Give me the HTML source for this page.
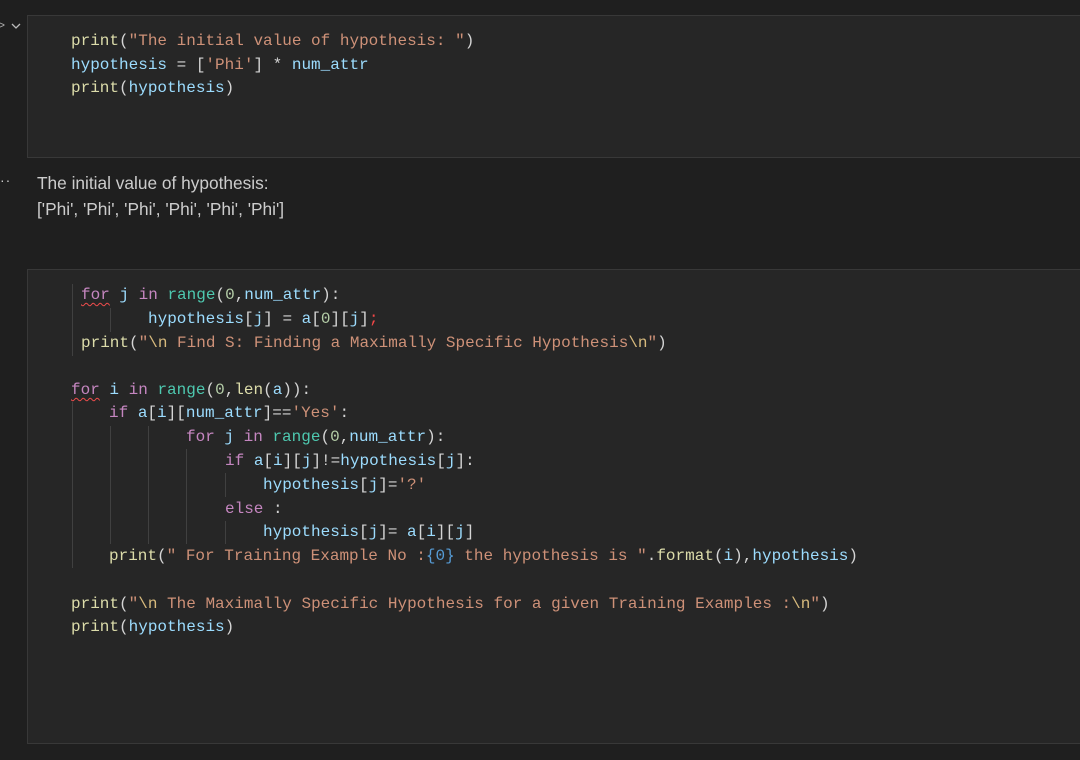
<!DOCTYPE html>
<html><head><meta charset="utf-8"><style>
html,body{margin:0;padding:0;background:#1f1f1f;width:1080px;height:760px;overflow:hidden;position:relative}
.cell{position:absolute;left:27px;width:1060px;background:#262626;border:1px solid #383838;box-sizing:border-box}
.l{position:absolute;font-family:"Liberation Mono",monospace;font-size:16px;line-height:24px;white-space:pre;color:#d4d4d4}
.f{color:#dcdcaa}.s{color:#ce9178}.v{color:#9cdcfe}.k{color:#c586c0}.c{color:#4ec9b0}.n{color:#b5cea8}.e{color:#d7ba7d}.b{color:#569cd6}.r{color:#f44747}
.sq{text-decoration:underline wavy #f14c4c;text-decoration-thickness:1px;text-underline-offset:3px}
.g{position:absolute;width:1px;background:#404040}
.out{position:absolute;left:37px;font-family:"Liberation Sans",sans-serif;font-size:17.3px;color:#cccccc;line-height:22px;letter-spacing:0px}
</style></head><body>
<div style="position:absolute;left:-2px;top:18px;color:#aaa;font:12px 'Liberation Sans',sans-serif">&gt;</div>
<svg style="position:absolute;left:11px;top:23px" width="10" height="7"><path d="M1 1 L5 5 L9 1" stroke="#bbb" stroke-width="1.3" fill="none"/></svg>
<div class="cell" style="top:15px;height:143px"></div>
<div class="l" style="left:71px;top:29px"><span class="f">print</span>(<span class="s">"The initial value of hypothesis: "</span>)</div>
<div class="l" style="left:71px;top:53px"><span class="v">hypothesis</span> = [<span class="s">'Phi'</span>] * <span class="v">num_attr</span></div>
<div class="l" style="left:71px;top:76px"><span class="f">print</span>(<span class="v">hypothesis</span>)</div>
<div style="position:absolute;left:0;top:172px;color:#ccc;font:14px 'Liberation Sans',sans-serif;letter-spacing:1px">··</div>
<div class="out" style="top:172px">The initial value of hypothesis:</div>
<div class="out" style="top:198px">['Phi', 'Phi', 'Phi', 'Phi', 'Phi', 'Phi']</div>
<div class="cell" style="top:269px;height:475px"></div>
<div class="g" style="left:72px;top:284px;height:72px"></div>
<div class="g" style="left:110px;top:308px;height:24px"></div>
<div class="g" style="left:72px;top:402px;height:166px"></div>
<div class="g" style="left:110px;top:426px;height:118px"></div>
<div class="g" style="left:148px;top:426px;height:118px"></div>
<div class="g" style="left:186px;top:449px;height:95px"></div>
<div class="g" style="left:225px;top:473px;height:24px"></div>
<div class="g" style="left:225px;top:521px;height:23px"></div>
<div class="l" style="left:81px;top:283px"><span class="k sq">for</span> <span class="v">j</span> <span class="k">in</span> <span class="c">range</span>(<span class="n">0</span>,<span class="v">num_attr</span>):</div>
<div class="l" style="left:148px;top:307px"><span class="v">hypothesis</span>[<span class="v">j</span>] = <span class="v">a</span>[<span class="n">0</span>][<span class="v">j</span>]<span class="r">;</span></div>
<div class="l" style="left:81px;top:331px"><span class="f">print</span>(<span class="s">"</span><span class="e">\n</span><span class="s"> Find S: Finding a Maximally Specific Hypothesis</span><span class="e">\n</span><span class="s">"</span>)</div>
<div class="l" style="left:71px;top:378px"><span class="k sq">for</span> <span class="v">i</span> <span class="k">in</span> <span class="c">range</span>(<span class="n">0</span>,<span class="f">len</span>(<span class="v">a</span>)):</div>
<div class="l" style="left:109px;top:401px"><span class="k">if</span> <span class="v">a</span>[<span class="v">i</span>][<span class="v">num_attr</span>]==<span class="s">'Yes'</span>:</div>
<div class="l" style="left:186px;top:425px"><span class="k">for</span> <span class="v">j</span> <span class="k">in</span> <span class="c">range</span>(<span class="n">0</span>,<span class="v">num_attr</span>):</div>
<div class="l" style="left:225px;top:449px"><span class="k">if</span> <span class="v">a</span>[<span class="v">i</span>][<span class="v">j</span>]!=<span class="v">hypothesis</span>[<span class="v">j</span>]:</div>
<div class="l" style="left:263px;top:473px"><span class="v">hypothesis</span>[<span class="v">j</span>]=<span class="s">'?'</span></div>
<div class="l" style="left:225px;top:497px"><span class="k">else</span> :</div>
<div class="l" style="left:263px;top:520px"><span class="v">hypothesis</span>[<span class="v">j</span>]= <span class="v">a</span>[<span class="v">i</span>][<span class="v">j</span>]</div>
<div class="l" style="left:109px;top:544px"><span class="f">print</span>(<span class="s">" For Training Example No :</span><span class="b">{0}</span><span class="s"> the hypothesis is "</span>.<span class="f">format</span>(<span class="v">i</span>),<span class="v">hypothesis</span>)</div>
<div class="l" style="left:71px;top:592px"><span class="f">print</span>(<span class="s">"</span><span class="e">\n</span><span class="s"> The Maximally Specific Hypothesis for a given Training Examples :</span><span class="e">\n</span><span class="s">"</span>)</div>
<div class="l" style="left:71px;top:615px"><span class="f">print</span>(<span class="v">hypothesis</span>)</div>
</body></html>
